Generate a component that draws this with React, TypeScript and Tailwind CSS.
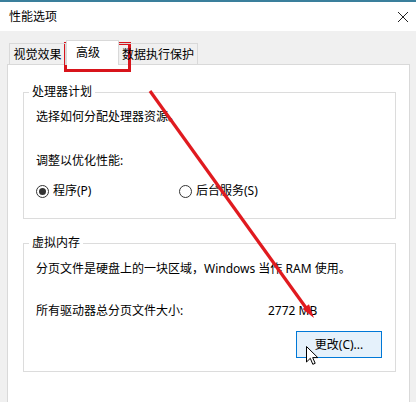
import type { ReactNode } from 'react';

const font = "font-['Noto_Sans','Noto_Sans_CJK_SC',sans-serif]";

function GroupBox({ title, children, className = '' }: { title: string; children: ReactNode; className?: string }) {
  return (
    <fieldset className={`border border-[#dcdcdc] ml-[15px] w-[373px] ${className}`}>
      <legend className="ml-[5px] px-[3px] leading-[16px]">{title}</legend>
      {children}
    </fieldset>
  );
}

function Radio({ checked, label }: { checked?: boolean; label: string }) {
  return (
    <label className="flex items-center gap-[4px]">
      <span className="w-[13px] h-[13px] rounded-full border border-[#333] bg-white flex items-center justify-center">
        {checked && <span className="w-[7px] h-[7px] rounded-full bg-[#333]" />}
      </span>
      <span>{label}</span>
    </label>
  );
}

export default function App() {
  return (
    <div className={`relative w-[416px] h-[402px] overflow-hidden bg-[#f0f0f0] text-[12px] leading-[16px] text-black ${font}`}>
      {/* 标题栏 */}
      <div className="h-[2px] bg-[#3a7f9c]" />
      <div className="h-[29px] bg-white flex items-center justify-between pl-[9px] pr-[7px]">
        <span>性能选项</span>
        <svg width="12" height="12" viewBox="0 0 12 12" className="stroke-[#222]" strokeWidth="1">
          <path d="M1 1 L11 11 M11 1 L1 11" />
        </svg>
      </div>

      {/* 选项卡 */}
      <div className="ml-[7px] w-[403px] mt-[9px]">
        <div className="flex items-end pl-[2px] -mb-px relative z-10">
          <div className="w-[57px] h-[22px] border border-b-0 border-[#d9d9d9] flex items-center justify-center">
            视觉效果
          </div>
          <div className="w-[53px] h-[25px] border border-b-0 border-[#d9d9d9] bg-white pl-[9px] pt-[4px]">
            高级
          </div>
          <div className="w-[79px] h-[22px] border border-b-0 border-l-0 border-[#d9d9d9] flex items-center justify-center">
            数据执行保护
          </div>
        </div>

        {/* 面板 */}
        <div className="h-[345px] bg-white border border-[#d9d9d9] pt-[19px]">
          <GroupBox title="处理器计划">
            <div className="pl-[12px] pt-[9px] pb-[19px]">
              <div>选择如何分配处理器资源。</div>
              <div className="mt-[28px]">调整以优化性能:</div>
              <div className="mt-[14px] flex">
                <div className="w-[143px]">
                  <Radio checked label="程序(P)" />
                </div>
                <Radio label="后台服务(S)" />
              </div>
            </div>
          </GroupBox>

          <GroupBox title="虚拟内存" className="mt-[16px]">
            <div className="pl-[12px] pr-[13px] pt-[10px] pb-[13px]">
              <div>分页文件是硬盘上的一块区域，Windows 当作 RAM 使用。</div>
              <div className="mt-[26px] flex">
                <span className="w-[232px]">所有驱动器总分页文件大小:</span>
                <span>2772 MB</span>
              </div>
              <div className="mt-[12px] flex justify-end">
                <button
                  type="button"
                  className="w-[86px] h-[27px] border border-[#0078d7] bg-[#e5f1fb] flex items-center justify-center"
                >
                  更改(C)...
                </button>
              </div>
            </div>
          </GroupBox>
        </div>
      </div>

      {/* 红色标注框 */}
      <div className="absolute left-[64px] top-[42px] w-[67px] h-[30px] border-[3px] border-[#d8141b] pointer-events-none" />

      {/* 红色箭头 */}
      <svg className="absolute left-0 top-0 pointer-events-none" width="416" height="402" viewBox="0 0 416 402">
        <line x1="150" y1="91" x2="309" y2="312" stroke="#e01a1f" strokeWidth="3.2" />
        <polygon points="314,318 302.6,308.9 309,304.3" fill="#e01a1f" />
      </svg>

      {/* 鼠标指针 */}
      <svg className="absolute left-[306px] top-[346px] pointer-events-none" width="13" height="20" viewBox="0 0 13 20">
        <path
          d="M0.5 0.5 L0.5 16 L4.3 12.3 L6.8 18.3 L9.2 17.3 L6.7 11.6 L11.8 11.6 Z"
          fill="white"
          stroke="black"
          strokeWidth="1"
          strokeLinejoin="round"
        />
      </svg>
    </div>
  );
}
